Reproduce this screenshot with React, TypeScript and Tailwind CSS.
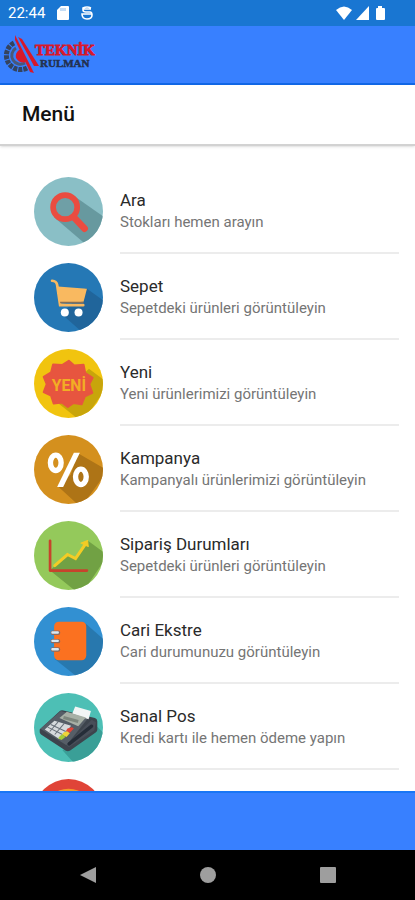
import React from "react";

interface MenuEntry {
  title: string;
  description: string;
  href: string;
  icon: React.ReactNode;
}

const SearchIcon = () => (
  <svg viewBox="28 24 206 206" className="size-full">
    <rect x="28" y="24" width="206" height="206" fill="#8abfc6" />
    <path d="M152 84 250 152 200 240 88 144Z" fill="#67999f" />
    <circle cx="121" cy="114" r="36" fill="#6f9fa6" stroke="#ea4c40" strokeWidth="17" />
    <path d="m147 144 32 34" stroke="#ea4c40" strokeWidth="20" strokeLinecap="round" />
  </svg>
);

const CartIcon = () => (
  <svg viewBox="28 27 206 206" className="size-full">
    <rect x="28" y="27" width="206" height="206" fill="#2578b5" />
    <path d="m183 102 70 50-60 100-82-72Z" fill="#20659b" />
    <path d="M82 80q13 1 15 12l9 61h69" fill="none" stroke="#f9b960" strokeWidth="8" strokeLinecap="round" />
    <path d="m99 97 87 7-10 39-71 5Z" fill="#f9b960" />
    <path d="M106 145h70" stroke="#846f59" strokeWidth="4" />
    <circle cx="120" cy="175" r="12" fill="#fff" />
    <circle cx="161" cy="175" r="12" fill="#fff" />
  </svg>
);

const NewIcon = () => (
  <svg viewBox="28 29 206 206" className="size-full">
    <rect x="28" y="29" width="206" height="206" fill="#f1c40f" />
    <path d="m192 88 60 45-80 115-80-64Z" fill="#c8a50b" />
    <path
      d="m132 64 16 14 28-2 5 25 22 14-10 19 9 26-22 10-10 24-24-4-17 12-17-13-25 3-8-24-22-10 9-24-9-22 22-13 6-24 27 2Z"
      fill="#e7553f"
      stroke="#e7553f"
      strokeWidth="6"
      strokeLinejoin="round"
    />
    <text x="132" y="154" textAnchor="middle" fontSize="47" fontWeight="700" fill="#f2ae24">
      YENİ
    </text>
  </svg>
);

const PercentIcon = () => (
  <svg viewBox="28 24 206 206" className="size-full">
    <rect x="28" y="24" width="206" height="206" fill="#d4901e" />
    <path d="m158 78 90 52-80 110-68-62 38-36Z" fill="#ae7416" />
    <g fill="none" stroke="#fff">
      <ellipse cx="93" cy="107" rx="16" ry="23" strokeWidth="16" />
      <ellipse cx="168" cy="149" rx="16" ry="23" strokeWidth="16" />
    </g>
    <path d="M147 77h18l-50 102H97Z" fill="#fff" />
  </svg>
);

const ChartIcon = () => (
  <svg viewBox="28 26 206 206" className="size-full">
    <rect x="28" y="26" width="206" height="206" fill="#94c95b" />
    <path d="m188 84 60 44-80 120-92-74 14-14 38-34 24 12Z" fill="#71a144" />
    <path d="M76 85v89h110" fill="none" stroke="#c7432c" strokeWidth="8" strokeLinecap="round" strokeLinejoin="round" />
    <path d="m90 159 38-33 24 12 29-42" fill="none" stroke="#f3cc25" strokeWidth="9" strokeLinecap="round" />
    <path d="m188 84 2 18-22-10Z" fill="#f3cc25" stroke="#f3cc25" strokeWidth="3" strokeLinejoin="round" />
  </svg>
);

const NotebookIcon = () => (
  <svg viewBox="28 27 206 206" className="size-full">
    <rect x="28" y="27" width="206" height="206" fill="#3290d2" />
    <path d="m182 76 70 62-80 110-82-66Z" fill="#2878ae" />
    <rect x="88" y="71" width="96" height="115" rx="14" fill="#fb7120" />
    <path d="M84 104h16M84 129h16M84 154h16" stroke="#8b6b61" strokeWidth="13" strokeLinecap="round" />
    <path d="M83 103h16M83 128h16M83 153h16" stroke="#d7e8f4" strokeWidth="7" strokeLinecap="round" />
  </svg>
);

const PosIcon = () => (
  <svg viewBox="28 25 206 206" className="size-full">
    <rect x="28" y="25" width="206" height="206" fill="#4dbfb5" />
    <path d="m217 126 30 30-80 100-54-60Z" fill="#3a9f97" />
    <path d="m45 134 61-56q4-3 10-1l94 23q7 3 7 9v26q0 5-5 8l-76 54q-7 4-14 0l-73-48q-5-4-4-9Z" fill="#3d444d" />
    <path d="m47 132 61-53 80 23-63 79Z" fill="#565e67" />
    <path d="m125 180 75-75 13 7-5 25-76 50Z" fill="#484e59" />
    <path d="m133 177 67-53" stroke="#252d38" strokeWidth="10" strokeLinecap="round" />
    <path d="m142 87 9-22 47 14-7 24Z" fill="#f2f5f5" />
    <path d="m104 100 22-19 57 17-23 26Z" fill="#a7b0a6" />
    <path d="m116 98 44 12" stroke="#7d877e" strokeWidth="9" />
    <path d="m60 134 29-26 50 15-35 40Z" fill="#d6dadd" />
    <path d="m69 127 44 22M78 119l45 21M75 140l25-29M90 149l29-34" stroke="#69717a" strokeWidth="3" />
    <path d="m128 131 13-4 6 4-12 13-12-5Z" fill="#e24437" />
    <path d="m116 143 11-4 8 6-10 11-13-6Z" fill="#f0d438" />
    <path d="m106 153 7-5 9 8-12 9-10-5Z" fill="#a5cc36" />
  </svg>
);

const TargetIcon = () => (
  <svg viewBox="0 0 206 206" className="size-full">
    <rect width="206" height="206" fill="#e04438" />
    <circle cx="103" cy="103" r="74" fill="#f39b2b" />
  </svg>
);

const menuEntries: MenuEntry[] = [
  { title: "Ara", description: "Stokları hemen arayın", href: "#ara", icon: <SearchIcon /> },
  { title: "Sepet", description: "Sepetdeki ürünleri görüntüleyin", href: "#sepet", icon: <CartIcon /> },
  { title: "Yeni", description: "Yeni ürünlerimizi görüntüleyin", href: "#yeni", icon: <NewIcon /> },
  { title: "Kampanya", description: "Kampanyalı ürünlerimizi görüntüleyin", href: "#kampanya", icon: <PercentIcon /> },
  { title: "Sipariş Durumları", description: "Sepetdeki ürünleri görüntüleyin", href: "#siparis", icon: <ChartIcon /> },
  { title: "Cari Ekstre", description: "Cari durumunuzu görüntüleyin", href: "#cari", icon: <NotebookIcon /> },
  { title: "Sanal Pos", description: "Kredi kartı ile hemen ödeme yapın", href: "#pos", icon: <PosIcon /> },
];

const Logo = () => (
  <svg viewBox="0 0 96 44" className="h-11 w-24" role="img" aria-label="Teknik Rulman">
    <path d="M14 13a13 13 0 1 0 13 25" fill="none" stroke="#34435f" strokeWidth="5" strokeDasharray="4 1" />
    <path d="M16 18a8 8 0 1 0 9 15" fill="none" stroke="#4a5878" strokeWidth="3" />
    <path d="M19 20q-4 3-3 8 4 6 10 4l-4-12Z" fill="#d8182b" />
    <path d="m15 5 19 38-4-1L15 10Z" fill="#d8182b" />
    <path d="m18 7 4 2 17 27h-5Z" fill="#d8182b" />
    <text x="35" y="25" fontSize="15" fontWeight="700" fill="#d8182b" stroke="#d8182b" strokeWidth="0.8" className="font-['Liberation_Serif',serif]">
      TEKNİK
    </text>
    <text x="40" y="37" fontSize="11" fontWeight="700" fill="#24314f" stroke="#24314f" strokeWidth="0.5" className="font-['Liberation_Serif',serif]">
      RULMAN
    </text>
  </svg>
);

const StatusBar = () => (
  <div className="flex h-[26px] shrink-0 items-center justify-between bg-[#1976d2] pr-7 pl-2 text-white">
    <div className="flex items-center gap-3">
      <span className="text-[15px]">22:44</span>
      <svg viewBox="0 0 12 14" className="h-3.5 w-3" fill="currentColor">
        <path d="M4 0h7q1 0 1 1v12q0 1-1 1H1q-1 0-1-1V4Z" />
        <path d="M4 2v3M6 2v3M8 2v3" stroke="#1976d2" strokeWidth="0.5" />
      </svg>
      <svg viewBox="0 0 12 14" className="h-3.5 w-3" fill="none" stroke="currentColor" strokeWidth="1.6">
        <path d="M10 2Q6 0 2 2v2q0 2 3 2h4q2 0 2 3 0 4-5 4T1 8h10M2 3h8" />
      </svg>
    </div>
    <div className="flex items-center gap-1">
      <svg viewBox="0 0 16 14" className="h-3.5 w-4" fill="currentColor">
        <path d="M0 4Q8-3 16 4L8 14Z" />
      </svg>
      <svg viewBox="0 0 13 14" className="h-3.5 w-[13px]" fill="currentColor">
        <path d="M13 0v14H0Z" />
      </svg>
      <svg viewBox="0 0 14 14" className="size-3.5" fill="currentColor">
        <path d="M5 0h4v2h2q1 0 1 1v10q0 1-1 1H4q-1 0-1-1V3q0-1 1-1h1Z" />
      </svg>
    </div>
  </div>
);

const IconCircle = ({ children }: { children: React.ReactNode }) => (
  <span className="size-[69px] shrink-0 overflow-hidden rounded-full">{children}</span>
);

const MenuRow = ({ entry }: { entry: MenuEntry }) => (
  <li>
    <a href={entry.href} className="flex h-[86px] items-center gap-[17px]">
      <IconCircle>{entry.icon}</IconCircle>
      <span className="flex h-full flex-1 flex-col justify-center border-b-2 border-[#ececec]">
        <span className="text-[17px] leading-6 text-[#2a2a2a]">{entry.title}</span>
        <span className="text-[15px] leading-5 text-[#757575]">{entry.description}</span>
      </span>
    </a>
  </li>
);

const App: React.FC = () => {
  return (
    <div className="flex h-screen flex-col bg-white font-[Roboto,sans-serif]">
      <StatusBar />
      <header className="flex h-[59px] shrink-0 items-start border-b-2 border-[#1268e8] bg-[#3880ff] pt-1">
        <Logo />
      </header>
      <div className="flex h-[61px] shrink-0 items-center border-b-2 border-[#d2d2d2] px-[22px] shadow-sm">
        <h1 className="text-[21px] font-medium text-[#111]">Menü</h1>
      </div>

      <main className="min-h-0 flex-1 overflow-hidden pt-[22px] pr-4 pl-[34px]">
        <ul>
          {menuEntries.map((entry) => (
            <MenuRow key={entry.title} entry={entry} />
          ))}
          {/* Next entry, only its top edge is above the footer */}
          <li className="flex h-[86px] items-center">
            <IconCircle>
              <TargetIcon />
            </IconCircle>
          </li>
        </ul>
      </main>

      <footer className="h-[59px] shrink-0 border-t-2 border-[#1976f5] bg-[#3880ff]" />
      <nav className="flex h-[50px] shrink-0 items-center justify-center gap-[102px] bg-black text-[#9e9e9e]">
        <button type="button" aria-label="Geri">
          <svg viewBox="0 0 18 18" className="size-[18px]" fill="currentColor">
            <path d="M17 1v16L1 9Z" />
          </svg>
        </button>
        <button type="button" aria-label="Ana ekran">
          <svg viewBox="0 0 18 18" className="size-[18px]" fill="currentColor">
            <circle cx="9" cy="9" r="8" />
          </svg>
        </button>
        <button type="button" aria-label="Son uygulamalar">
          <svg viewBox="0 0 18 18" className="size-[18px]" fill="currentColor">
            <rect x="1" y="1" width="16" height="16" rx="1" />
          </svg>
        </button>
      </nav>
    </div>
  );
};

export default App;
